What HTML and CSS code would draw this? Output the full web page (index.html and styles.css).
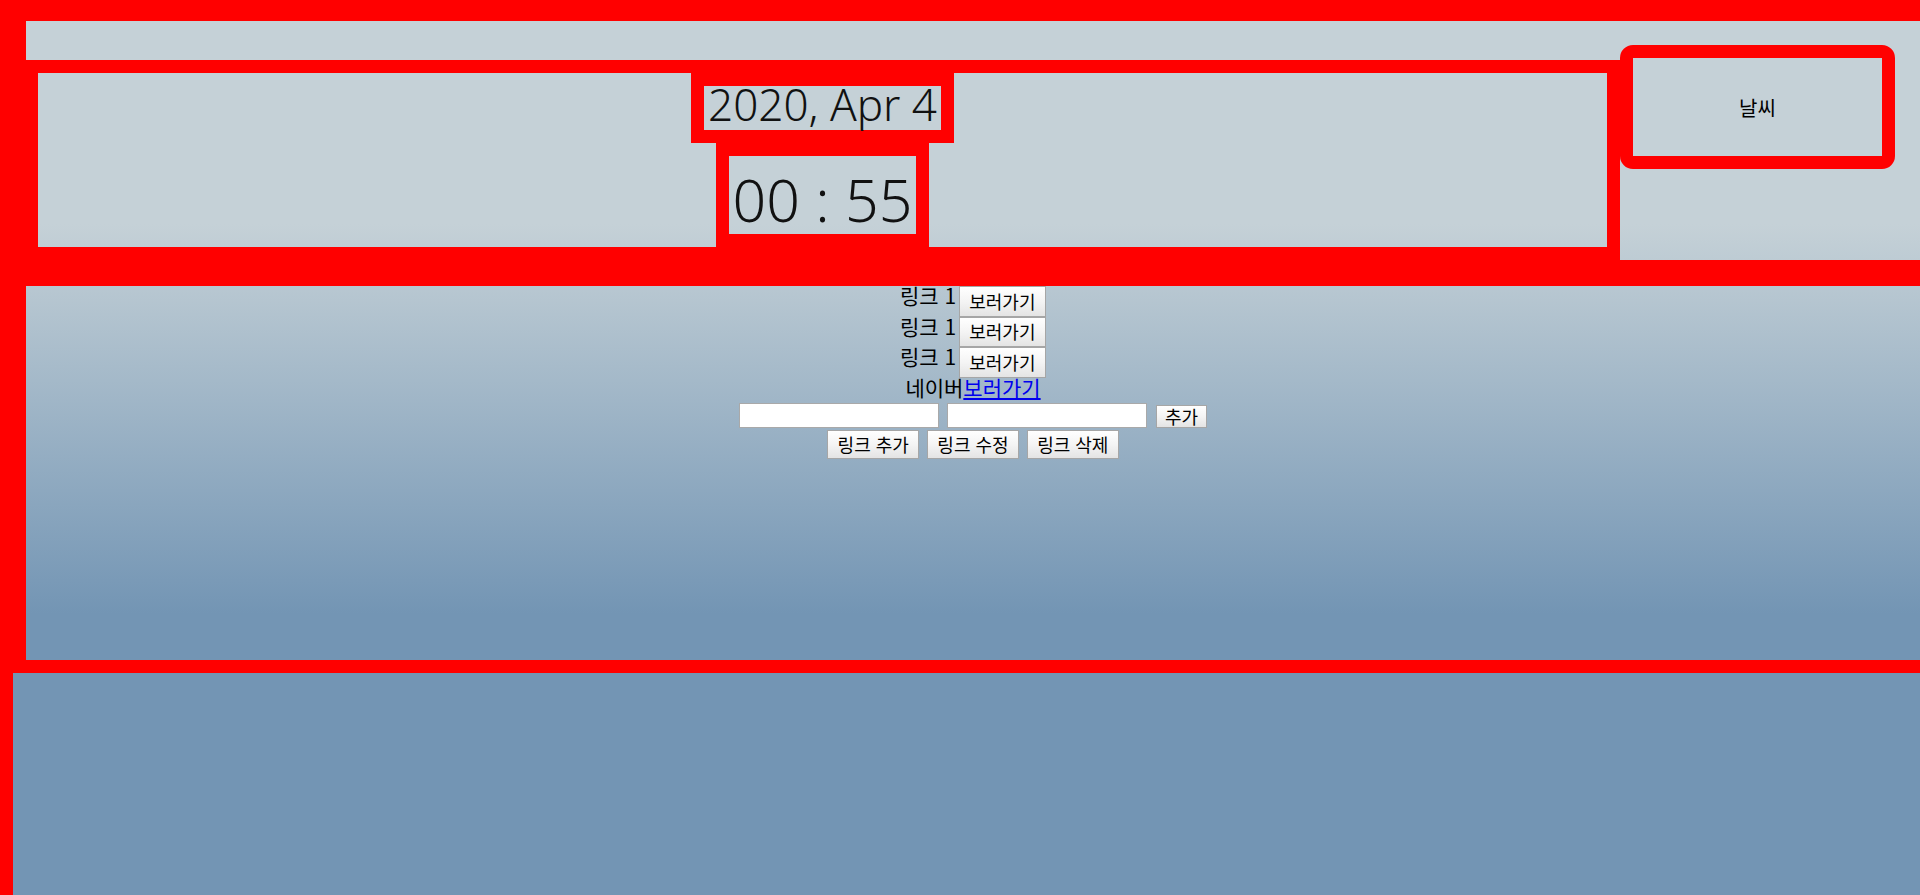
FILE: index.html
```html
<!DOCTYPE html>
<html lang="ko">
<head>
<meta charset="utf-8">
<title>New Tab</title>
<link rel="stylesheet" href="styles.css">
</head>
<body>
<div class="wrap">
  <header class="header">
    <section class="clock">
      <div class="date">2020, Apr 4</div>
      <div class="time">00 : 55</div>
    </section>
    <section class="weather">날씨</section>
  </header>
  <main class="links">
    <div class="row row-link"><span class="label">링크 1</span><button class="btn">보러가기</button></div>
    <div class="row row-link"><span class="label">링크 1</span><button class="btn">보러가기</button></div>
    <div class="row row-link"><span class="label">링크 1</span><button class="btn">보러가기</button></div>
    <div class="row row-text"><span class="label">네이버</span><a class="go" href="#">보러가기</a></div>
    <div class="row row-form"><input class="field" type="text"><input class="field" type="text"><button class="btn btn-small">추가</button></div>
    <div class="row row-actions"><button class="btn">링크 추가</button><button class="btn">링크 수정</button><button class="btn">링크 삭제</button></div>
  </main>
</div>
</body>
</html>
```
FILE: styles.css
```css
html {
  height: 100%;
  background: linear-gradient(to bottom, #c5d1d7 0, #c5d1d7 224px, #7395b4 614px, #7395b4 100%);
}

body {
  margin: 0;
  min-height: 100%;
  box-sizing: border-box;
  border-left: 13px solid #ff0000;
  overflow: hidden;
  font-family: "Noto Sans CJK KR", "Noto Sans", sans-serif;
  font-size: 16px;
  color: #000;
}

.wrap {
  border-left: 13px solid #ff0000;
  border-top: 21px solid #ff0000;
  border-bottom: 13px solid #ff0000;
}

.header {
  display: flex;
  align-items: flex-start;
  padding-top: 24px;
  border-bottom: 26px solid #ff0000;
}

.clock {
  box-sizing: border-box;
  width: 1594px;
  flex: none;
  margin-top: 15px;
  border: 13px solid #ff0000;
  border-left-width: 12px;
  display: flex;
  flex-direction: column;
  align-items: center;
  font-family: "Noto Sans", sans-serif;
  font-weight: 300;
  color: #111;
}

.date {
  width: 237px;
  height: 44px;
  border: 13px solid #ff0000;
  font-size: 44px;
  line-height: 36px;
  text-align: center;
  white-space: nowrap;
}

.time {
  width: 187px;
  height: 78px;
  border: 13px solid #ff0000;
  font-size: 59px;
  line-height: 86px;
  text-align: center;
  white-space: nowrap;
}

.weather {
  box-sizing: border-box;
  flex: none;
  width: 275px;
  height: 124px;
  border: 13px solid #ff0000;
  border-radius: 13px;
  display: flex;
  align-items: center;
  justify-content: center;
  font-size: 20px;
}

.links {
  height: 374px;
  display: flex;
  flex-direction: column;
  align-items: center;
}

.row {
  display: flex;
  justify-content: center;
}

.label {
  font-size: 21px;
  line-height: 19px;
  white-space: nowrap;
}

.row-link {
  height: 30.5px;
  gap: 2.5px;
}

.row-text {
  height: 21.5px;
  padding-top: 0.5px;
  font-size: 21px;
  line-height: 19px;
}

.go {
  color: #0000ee;
  text-decoration: underline;
  white-space: nowrap;
}

.row-form {
  height: 28.5px;
  gap: 8.5px;
  align-items: flex-end;
}

.row-actions {
  margin-top: 1.5px;
  height: 29.5px;
  gap: 7.5px;
}

.btn {
  box-sizing: border-box;
  margin: 0;
  padding: 0 9.5px;
  border: 1px solid #a6a6a6;
  border-radius: 0;
  background: linear-gradient(to bottom, #ffffff 0%, #f4f4f4 50%, #e4e4e4 100%);
  font-family: "Noto Sans CJK KR", sans-serif;
  font-size: 18px;
  line-height: 21px;
  color: #000;
  white-space: nowrap;
}

.btn-small {
  padding: 0 8px;
}

.field {
  box-sizing: border-box;
  width: 200px;
  height: 25.5px;
  margin: 0;
  padding: 1px 2px;
  border: 1px solid #a9a9a9;
  background: #fff;
  font-size: 16px;
}
```
